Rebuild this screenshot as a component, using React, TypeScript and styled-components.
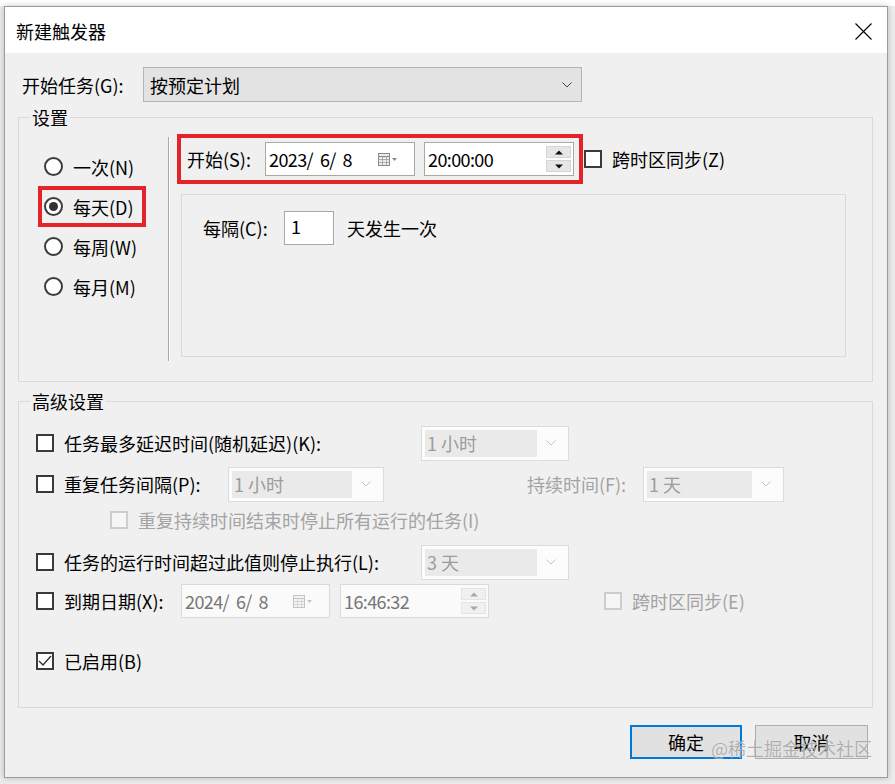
import React from 'react';
import styled, { createGlobalStyle, css } from 'styled-components';

const GlobalStyle = createGlobalStyle`
  html, body { margin: 0; padding: 0; }
  body {
    background: #ffffff;
    font-family: "Noto Sans CJK SC", "Noto Sans", sans-serif;
    font-size: 18px;
    color: #000;
    overflow: hidden;
  }
  * { box-sizing: border-box; }
`;

const Page = styled.div`
  width: 895px;
  height: 784px;
  padding: 6px 0 0 4px;
  background: linear-gradient(to bottom, #ffffff 0 6px, #ececec 6px);
`;

const Dialog = styled.div`
  position: relative;
  width: 884px;
  height: 772px;
  border: 1px solid #9c9c9c;
  box-shadow: 0 0 6px rgba(0, 0, 0, 0.22);
  display: flex;
  flex-direction: column;
  background: #f0f0f0;
`;

const TitleBar = styled.div`
  height: 46px;
  flex: none;
  background: #ffffff;
  display: flex;
  align-items: center;
  justify-content: space-between;
  padding: 2px 15px 0 11px;
  font-size: 18px;
`;

const Body = styled.div`
  flex: 1;
  display: flex;
  flex-direction: column;
  padding: 14px 14px 0 13px;
`;

const TopRow = styled.div`
  display: flex;
  align-items: center;
  height: 35px;
`;

const TopLabel = styled.span`
  width: 125px;
  padding-left: 4px;
`;

const ComboBox = styled.div<{ $w: number }>`
  width: ${(p) => p.$w}px;
  height: 35px;
  border: 1px solid #b4b4b4;
  background: #e3e3e3;
  display: flex;
  align-items: center;
  justify-content: space-between;
  padding: 0 9px 0 6px;
`;

const DisabledCombo = styled.div<{ $w: number }>`
  width: ${(p) => p.$w}px;
  height: 35px;
  flex: none;
  border: 1px solid #dcdcdc;
  background: #fcfcfc;
  display: flex;
  align-items: center;
  padding: 3px;
`;

const ComboFace = styled.span`
  flex: none;
  width: calc(100% - 28px);
  height: 100%;
  background: #eaeaea;
  color: #9c9c9c;
  display: flex;
  align-items: center;
  padding-left: 2px;
`;

const ComboArrow = styled.span`
  flex: 1;
  display: flex;
  justify-content: center;
  align-items: center;
`;

const Group = styled.fieldset<{ $mt: number; $pb: number }>`
  margin: ${(p) => p.$mt}px 0 0 0;
  padding: 0 0 ${(p) => p.$pb}px 0;
  border: 1px solid #d9d9d9;
  min-width: 0;
`;

const Legend = styled.legend`
  margin-left: 11px;
  padding: 0 2px;
  line-height: 22px;
  font-size: 18px;
`;

const SettingsInner = styled.div`
  display: flex;
  align-items: flex-start;
`;

const RadioColumn = styled.div`
  width: 149px;
  flex: none;
  padding: 22px 0 0 23px;
  display: flex;
  flex-direction: column;
  gap: 7px;
`;

const RadioRow = styled.div<{ $highlight?: boolean }>`
  display: flex;
  align-items: center;
  gap: 10px;
  width: 100px;
  height: 33px;
  padding-left: 2px;
  ${(p) =>
    p.$highlight &&
    css`
      outline: 4px solid #e3242b;
    `}
`;

const RadioCircle = styled.span<{ $checked?: boolean }>`
  width: 19px;
  height: 19px;
  flex: none;
  border-radius: 50%;
  border: 2px solid #3c3c3c;
  background: #ffffff;
  display: flex;
  align-items: center;
  justify-content: center;
  &::after {
    content: '';
    display: ${(p) => (p.$checked ? 'block' : 'none')};
    width: 9px;
    height: 9px;
    border-radius: 50%;
    background: #333333;
  }
`;

const Separator = styled.div`
  width: 1px;
  height: 224px;
  flex: none;
  margin-top: 9px;
  background: #a9a9a9;
  box-shadow: 1px 0 0 #ffffff;
`;

const RightColumn = styled.div`
  margin: 10px 0 0 12px;
  display: flex;
  flex-direction: column;
`;

const StartRow = styled.div`
  display: flex;
  align-items: center;
`;

const RedFrame = styled.div`
  width: 398px;
  height: 42px;
  display: flex;
  align-items: center;
  padding: 0 5px 0 6px;
  outline: 4px solid #e3242b;
`;

const FieldLabel = styled.span<{ $w?: number; $disabled?: boolean; $ml?: number }>`
  flex: none;
  white-space: nowrap;
  ${(p) => (p.$w ? `width: ${p.$w}px;` : '')}
  ${(p) => (p.$ml ? `margin-left: ${p.$ml}px;` : '')}
  color: ${(p) => (p.$disabled ? '#a3a3a3' : '#000')};
`;

const TextBox = styled.div<{ $w: number; $disabled?: boolean; $ml?: number }>`
  width: ${(p) => p.$w}px;
  height: 34px;
  flex: none;
  margin-left: ${(p) => p.$ml ?? 0}px;
  border: 1px solid ${(p) => (p.$disabled ? '#dadada' : '#a8a8a8')};
  background: ${(p) => (p.$disabled ? '#fafafa' : '#ffffff')};
  color: ${(p) => (p.$disabled ? '#767676' : '#000')};
  display: flex;
  align-items: center;
  padding: 0 2px 0 3px;
`;

const BoxText = styled.span`
  flex: 1;
  white-space: pre;
  letter-spacing: -0.6px;
`;

const CalIcon = styled.span`
  display: flex;
  margin-right: 14px;
`;

const Spinner = styled.div`
  display: flex;
  flex-direction: column;
  gap: 2px;
  width: 25px;
`;

const SpinButton = styled.span<{ $disabled?: boolean }>`
  height: 12px;
  border: 1px solid ${(p) => (p.$disabled ? '#e4e4e4' : '#d4d4d4')};
  background: ${(p) => (p.$disabled ? '#f0f0f0' : '#e6e6e6')};
  display: flex;
  align-items: center;
  justify-content: center;
`;

const CheckBox = styled.span<{ $disabled?: boolean; $ml?: number }>`
  width: 18px;
  height: 18px;
  flex: none;
  margin-left: ${(p) => p.$ml ?? 0}px;
  margin-right: 10px;
  border: 2px solid ${(p) => (p.$disabled ? '#cdcdcd' : '#3a3a3a')};
  background: ${(p) => (p.$disabled ? '#f6f6f6' : '#ffffff')};
  display: flex;
  align-items: center;
  justify-content: center;
`;

const Panel = styled.div`
  margin-top: 14px;
  width: 665px;
  height: 163px;
  border: 1px solid #dadada;
  padding: 16px 0 0 21px;
`;

const PanelRow = styled.div`
  display: flex;
  align-items: center;
  height: 34px;
`;

const NumberBox = styled.div`
  width: 50px;
  height: 34px;
  border: 1px solid #a8a8a8;
  background: #ffffff;
  padding: 1px 0 0 6px;
  line-height: 26px;
  margin-right: 13px;
`;

const AdvancedInner = styled.div`
  padding: 13px 0 0 17px;
  display: flex;
  flex-direction: column;
`;

const AdvRow = styled.div<{ $mt?: number; $indent?: number }>`
  display: flex;
  align-items: center;
  height: 36px;
  margin-top: ${(p) => p.$mt ?? 0}px;
  padding-left: ${(p) => p.$indent ?? 0}px;
`;

const Footer = styled.div`
  display: flex;
  justify-content: flex-end;
  gap: 13px;
  margin: 17px 5px 0 0;
`;

const Button = styled.button<{ $primary?: boolean }>`
  width: ${(p) => (p.$primary ? 112 : 113)}px;
  height: 34px;
  padding: 0;
  font: inherit;
  font-size: 18px;
  color: #000;
  background: #e1e1e1;
  border: ${(p) => (p.$primary ? '2px solid #0078d7' : '1px solid #adadad')};
`;

const Watermark = styled.span`
  position: absolute;
  right: 15px;
  bottom: 18px;
  font-size: 18px;
  line-height: 22px;
  color: rgba(110, 110, 110, 0.55);
  text-shadow: 0 0 1px rgba(255, 255, 255, 0.9);
  pointer-events: none;
`;

const Chevron = ({ color = '#444' }: { color?: string }) => (
  <svg width="10" height="6" viewBox="0 0 10 6">
    <polyline points="0.5,0.5 5,5 9.5,0.5" fill="none" stroke={color} strokeWidth="1" />
  </svg>
);

const CloseIcon = () => (
  <svg width="17" height="17" viewBox="0 0 17 17">
    <line x1="0.5" y1="0.5" x2="16.5" y2="16.5" stroke="#000" strokeWidth="1.1" />
    <line x1="16.5" y1="0.5" x2="0.5" y2="16.5" stroke="#000" strokeWidth="1.1" />
  </svg>
);

const Calendar = ({ disabled }: { disabled?: boolean }) => {
  const c = disabled ? '#c4c4c4' : '#8a8a8a';
  return (
    <svg width="20" height="13" viewBox="0 0 20 13">
      <rect x="0.5" y="0.5" width="11" height="12" fill={disabled ? '#f4f4f4' : '#ececec'} stroke={c} />
      <line x1="0.5" y1="3.5" x2="11.5" y2="3.5" stroke={c} />
      <line x1="0.5" y1="6.5" x2="11.5" y2="6.5" stroke={c} strokeOpacity="0.6" />
      <line x1="0.5" y1="9.5" x2="11.5" y2="9.5" stroke={c} strokeOpacity="0.6" />
      <line x1="4.5" y1="3.5" x2="4.5" y2="12.5" stroke={c} strokeOpacity="0.6" />
      <line x1="8.5" y1="3.5" x2="8.5" y2="12.5" stroke={c} strokeOpacity="0.6" />
      <polygon points="14,5 19,5 16.5,8" fill={c} />
    </svg>
  );
};

const Tri = ({ up, color }: { up?: boolean; color: string }) => (
  <svg width="8" height="5" viewBox="0 0 8 5">
    <polygon points={up ? '0,4.5 8,4.5 4,0.5' : '0,0.5 8,0.5 4,4.5'} fill={color} />
  </svg>
);

const Check = () => (
  <svg width="14" height="12" viewBox="0 0 14 12">
    <polyline points="1,6 5,10 13,1" fill="none" stroke="#333" strokeWidth="1.4" />
  </svg>
);

const DateField = ({ value, w, disabled, ml }: { value: string; w: number; disabled?: boolean; ml?: number }) => (
  <TextBox $w={w} $disabled={disabled} $ml={ml}>
    <BoxText>{value}</BoxText>
    <CalIcon>
      <Calendar disabled={disabled} />
    </CalIcon>
  </TextBox>
);

const TimeField = ({ value, w, disabled, ml }: { value: string; w: number; disabled?: boolean; ml?: number }) => {
  const c = disabled ? '#a8a8a8' : '#111';
  return (
    <TextBox $w={w} $disabled={disabled} $ml={ml}>
      <BoxText>{value}</BoxText>
      <Spinner>
        <SpinButton $disabled={disabled}>
          <Tri up color={c} />
        </SpinButton>
        <SpinButton $disabled={disabled}>
          <Tri color={c} />
        </SpinButton>
      </Spinner>
    </TextBox>
  );
};

const GreyCombo = ({ w, value }: { w: number; value: string }) => (
  <DisabledCombo $w={w}>
    <ComboFace>{value}</ComboFace>
    <ComboArrow>
      <Chevron color="#c2c2c2" />
    </ComboArrow>
  </DisabledCombo>
);

const radios = [
  { label: '一次(N)', checked: false },
  { label: '每天(D)', checked: true },
  { label: '每周(W)', checked: false },
  { label: '每月(M)', checked: false },
];

export default function App() {
  return (
    <>
      <GlobalStyle />
      <Page>
        <Dialog>
          <TitleBar>
            <span>新建触发器</span>
            <CloseIcon />
          </TitleBar>
          <Body>
            <TopRow>
              <TopLabel>开始任务(G):</TopLabel>
              <ComboBox $w={439}>
                <span>按预定计划</span>
                <Chevron />
              </ComboBox>
            </TopRow>

            <Group $mt={4} $pb={20}>
              <Legend>设置</Legend>
              <SettingsInner>
                <RadioColumn>
                  {radios.map((r) => (
                    <RadioRow key={r.label} $highlight={r.checked}>
                      <RadioCircle $checked={r.checked} />
                      <span>{r.label}</span>
                    </RadioRow>
                  ))}
                </RadioColumn>
                <Separator />
                <RightColumn>
                  <StartRow>
                    <RedFrame>
                      <FieldLabel $w={78}>开始(S):</FieldLabel>
                      <DateField w={150} value="2023/  6/  8" />
                      <TimeField w={150} ml={9} value="20:00:00" />
                    </RedFrame>
                    <CheckBox $ml={5} />
                    <FieldLabel>跨时区同步(Z)</FieldLabel>
                  </StartRow>
                  <Panel>
                    <PanelRow>
                      <FieldLabel $w={81}>每隔(C):</FieldLabel>
                      <NumberBox>1</NumberBox>
                      <FieldLabel>天发生一次</FieldLabel>
                    </PanelRow>
                  </Panel>
                </RightColumn>
              </SettingsInner>
            </Group>

            <Group $mt={8} $pb={28}>
              <Legend>高级设置</Legend>
              <AdvancedInner>
                <AdvRow>
                  <CheckBox />
                  <FieldLabel $w={357}>任务最多延迟时间(随机延迟)(K):</FieldLabel>
                  <GreyCombo w={148} value="1 小时" />
                </AdvRow>
                <AdvRow $mt={5}>
                  <CheckBox />
                  <FieldLabel $w={164}>重复任务间隔(P):</FieldLabel>
                  <GreyCombo w={156} value="1 小时" />
                  <FieldLabel $w={116} $ml={143} $disabled>
                    持续时间(F):
                  </FieldLabel>
                  <GreyCombo w={141} value="1 天" />
                </AdvRow>
                <AdvRow $indent={74}>
                  <CheckBox $disabled />
                  <FieldLabel $disabled>重复持续时间结束时停止所有运行的任务(I)</FieldLabel>
                </AdvRow>
                <AdvRow $mt={6}>
                  <CheckBox />
                  <FieldLabel $w={357}>任务的运行时间超过此值则停止执行(L):</FieldLabel>
                  <GreyCombo w={148} value="3 天" />
                </AdvRow>
                <AdvRow $mt={3}>
                  <CheckBox />
                  <FieldLabel $w={117}>到期日期(X):</FieldLabel>
                  <DateField w={149} disabled value="2024/  6/  8" />
                  <TimeField w={149} ml={10} disabled value="16:46:32" />
                  <CheckBox $disabled $ml={115} />
                  <FieldLabel $disabled>跨时区同步(E)</FieldLabel>
                </AdvRow>
                <AdvRow $mt={24}>
                  <CheckBox>
                    <Check />
                  </CheckBox>
                  <FieldLabel>已启用(B)</FieldLabel>
                </AdvRow>
              </AdvancedInner>
            </Group>

            <Footer>
              <Button $primary>确定</Button>
              <Button>取消</Button>
            </Footer>
          </Body>
          <Watermark>@稀土掘金技术社区</Watermark>
        </Dialog>
      </Page>
    </>
  );
}
